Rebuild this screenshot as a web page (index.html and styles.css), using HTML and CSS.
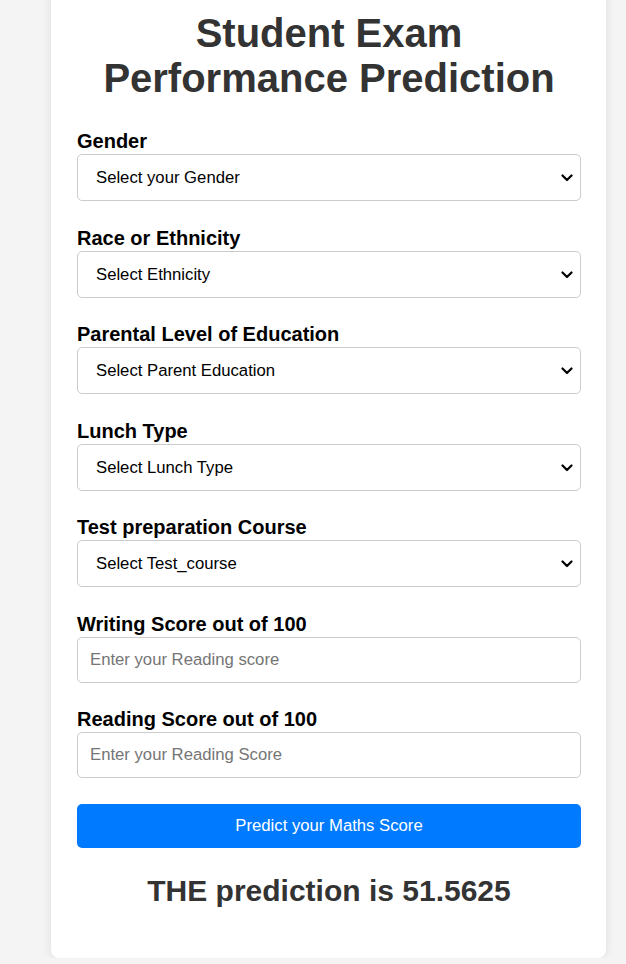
FILE: index.html
```html
<!DOCTYPE html>
<html lang="en">
<head>
<meta charset="utf-8">
<title>Student Exam Performance Prediction</title>
<link rel="stylesheet" href="styles.css">
</head>
<body>
<div class="card">
  <h1 class="title">Student Exam Performance Prediction</h1>
  <form class="form">
    <div class="group">
      <label class="label">Gender</label>
      <div class="select-wrap">
        <select class="control select">
          <option>Select your Gender</option>
          <option>male</option>
          <option>female</option>
        </select>
        <svg class="chevron" width="12" height="8" viewBox="0 0 12 8" aria-hidden="true"><path d="M1.5 1.5 L6 6 L10.5 1.5" fill="none" stroke="#000" stroke-width="2.2" stroke-linecap="round" stroke-linejoin="round"/></svg>
      </div>
    </div>
    <div class="group">
      <label class="label">Race or Ethnicity</label>
      <div class="select-wrap">
        <select class="control select">
          <option>Select Ethnicity</option>
        </select>
        <svg class="chevron" width="12" height="8" viewBox="0 0 12 8" aria-hidden="true"><path d="M1.5 1.5 L6 6 L10.5 1.5" fill="none" stroke="#000" stroke-width="2.2" stroke-linecap="round" stroke-linejoin="round"/></svg>
      </div>
    </div>
    <div class="group">
      <label class="label">Parental Level of Education</label>
      <div class="select-wrap">
        <select class="control select">
          <option>Select Parent Education</option>
        </select>
        <svg class="chevron" width="12" height="8" viewBox="0 0 12 8" aria-hidden="true"><path d="M1.5 1.5 L6 6 L10.5 1.5" fill="none" stroke="#000" stroke-width="2.2" stroke-linecap="round" stroke-linejoin="round"/></svg>
      </div>
    </div>
    <div class="group">
      <label class="label">Lunch Type</label>
      <div class="select-wrap">
        <select class="control select">
          <option>Select Lunch Type</option>
        </select>
        <svg class="chevron" width="12" height="8" viewBox="0 0 12 8" aria-hidden="true"><path d="M1.5 1.5 L6 6 L10.5 1.5" fill="none" stroke="#000" stroke-width="2.2" stroke-linecap="round" stroke-linejoin="round"/></svg>
      </div>
    </div>
    <div class="group">
      <label class="label">Test preparation Course</label>
      <div class="select-wrap">
        <select class="control select">
          <option>Select Test_course</option>
        </select>
        <svg class="chevron" width="12" height="8" viewBox="0 0 12 8" aria-hidden="true"><path d="M1.5 1.5 L6 6 L10.5 1.5" fill="none" stroke="#000" stroke-width="2.2" stroke-linecap="round" stroke-linejoin="round"/></svg>
      </div>
    </div>
    <div class="group">
      <label class="label">Writing Score out of 100</label>
      <input class="control input" type="number" placeholder="Enter your Reading score">
    </div>
    <div class="group">
      <label class="label">Reading Score out of 100</label>
      <input class="control input" type="number" placeholder="Enter your Reading Score">
    </div>
    <button class="submit" type="button">Predict your Maths Score</button>
  </form>
  <h2 class="result">THE prediction is 51.5625</h2>
</div>
</body>
</html>
```
FILE: styles.css
```css
html, body {
  margin: 0;
  padding: 0;
}
body {
  background: #f4f4f4;
  font-family: "Liberation Sans", Arial, sans-serif;
  color: #000;
}
.card {
  box-sizing: border-box;
  width: 555px;
  margin: -14px 0 0 51px;
  padding: 25px 25px 25px 26px;
  background: #fff;
  border-radius: 8px;
  box-shadow: 0 0 10px rgba(0, 0, 0, 0.1);
}
.title {
  margin: 0 0 29px;
  font-size: 40px;
  font-weight: bold;
  color: #333;
  text-align: center;
  line-height: normal;
}
.form {
  display: flex;
  flex-direction: column;
}
.group {
  display: flex;
  flex-direction: column;
  margin-bottom: 25.5px;
}
.label {
  display: block;
  font-size: 20px;
  font-weight: bold;
  margin-bottom: 1px;
  color: #000;
}
.control {
  box-sizing: border-box;
  width: 100%;
  padding: 0 12px;
  font-family: "Liberation Sans", Arial, sans-serif;
  font-size: 16.7px;
  color: #000;
  background: #fff;
  border: 1px solid #ccc;
  border-radius: 5px;
}
.select-wrap {
  position: relative;
}
.select {
  display: block;
  height: 47px;
  padding-left: 18px;
  -webkit-appearance: none;
  appearance: none;
}
.chevron {
  position: absolute;
  right: 8px;
  top: 20px;
  pointer-events: none;
}
.input {
  height: 46px;
}
.input::placeholder {
  color: #757575;
}
.submit {
  height: 44px;
  width: 100%;
  border: none;
  border-radius: 5px;
  background: #007bff;
  color: #fff;
  font-family: "Liberation Sans", Arial, sans-serif;
  font-size: 16.7px;
  cursor: pointer;
}
.result {
  margin: 26px 0 25px;
  font-size: 30px;
  font-weight: bold;
  color: #333;
  text-align: center;
  line-height: normal;
}
```
